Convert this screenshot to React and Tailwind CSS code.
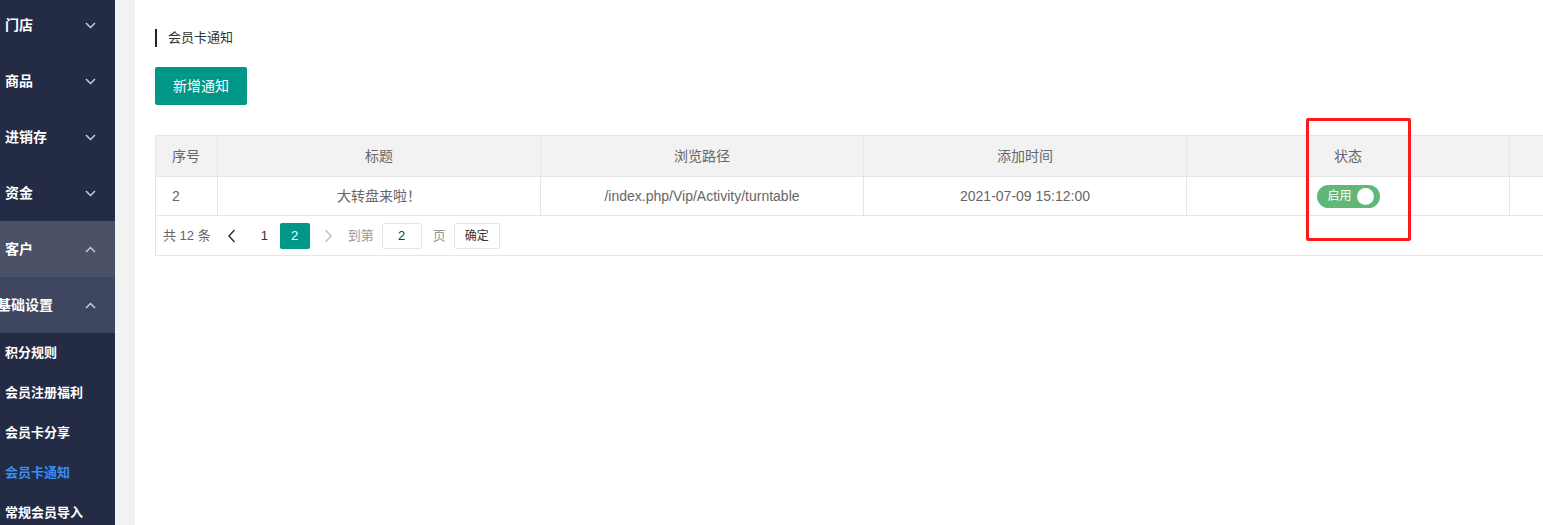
import React from "react";

const font = { fontFamily: "'Liberation Sans', 'Noto Sans CJK SC', sans-serif" };

function Chevron({ up }) {
  return (
    <svg width="11" height="7" viewBox="0 0 11 7" fill="none" className="shrink-0">
      {up ? (
        <path d="M1 6L5.5 1.5L10 6" stroke="#c9ccd6" strokeWidth="1.5" />
      ) : (
        <path d="M1 1L5.5 5.5L10 1" stroke="#c9ccd6" strokeWidth="1.5" />
      )}
    </svg>
  );
}

const menus = [
  { t: "门店" },
  { t: "商品" },
  { t: "进销存" },
  { t: "资金" },
  { t: "客户", up: true, bg: "bg-[#4b5166]" },
  { t: "基础设置", up: true, bg: "bg-[#3e4660]", shift: true },
];

const subs = ["积分规则", "会员注册福利", "会员卡分享", "会员卡通知", "常规会员导入"];

export default function App() {
  return (
    <div className="relative flex h-[525px] w-[1543px] overflow-hidden bg-white" style={font}>
      {/* Sidebar */}
      <div className="flex w-[115px] shrink-0 flex-col overflow-hidden bg-[#232b45]">
        {menus.map((m, i) => (
          <div
            key={i}
            className={`flex h-[56px] shrink-0 items-center justify-between pr-[19px] ${m.shift ? "-ml-[3px] pl-0" : "pl-[5px]"} ${m.bg || ""} ${i === 0 ? "-mt-[3px]" : ""}`}
          >
            <span className="whitespace-nowrap text-[14px] font-bold text-white">{m.t}</span>
            <Chevron up={m.up} />
          </div>
        ))}
        {subs.map((s, i) => (
          <div key={i} className="flex h-[40px] shrink-0 items-center pl-[5px]">
            <span className={`whitespace-nowrap text-[13px] font-bold ${s === "会员卡通知" ? "text-[#3b8ef0]" : "text-white"}`}>{s}</span>
          </div>
        ))}
      </div>
      <div className="w-[20px] shrink-0 bg-[#f2f2f2]" />
      {/* Content */}
      <div className="flex min-w-0 flex-1 flex-col overflow-hidden pl-[20px] pt-[29px]">
        <div className="flex h-[18px] items-center border-l-[2px] border-[#23262e] pl-[11px]">
          <span className="text-[13px] text-[#333]">会员卡通知</span>
        </div>
        <div className="mt-[20px]">
          <button className="h-[38px] w-[92px] rounded-[2px] bg-[#009688] text-[14px] text-white">新增通知</button>
        </div>
        <div className="mt-[30px] w-[1700px]">
          <table className="w-[1700px] table-fixed border-collapse text-[14px] text-[#666]">
            <colgroup>
              <col className="w-[62px]" />
              <col className="w-[323px]" />
              <col className="w-[323px]" />
              <col className="w-[323px]" />
              <col className="w-[323px]" />
              <col />
            </colgroup>
            <thead>
              <tr className="h-[41px] bg-[#f2f2f2]">
                <th className="border border-[#e6e6e6] pl-[16px] text-left font-normal">序号</th>
                <th className="border border-[#e6e6e6] font-normal">标题</th>
                <th className="border border-[#e6e6e6] font-normal">浏览路径</th>
                <th className="border border-[#e6e6e6] font-normal">添加时间</th>
                <th className="border border-[#e6e6e6] font-normal">状态</th>
                <th className="border border-[#e6e6e6] font-normal"></th>
              </tr>
            </thead>
            <tbody>
              <tr className="h-[39px]">
                <td className="border border-[#e6e6e6] pl-[16px] text-left">2</td>
                <td className="border border-[#e6e6e6] text-center">大转盘来啦<span style={{ fontFamily: "'Noto Sans CJK SC', sans-serif" }}>！</span></td>
                <td className="border border-[#e6e6e6] text-center">/index.php/Vip/Activity/turntable</td>
                <td className="border border-[#e6e6e6] text-center">2021-07-09 15:12:00</td>
                <td className="border border-[#e6e6e6] text-center">
                  <div className="inline-flex h-[23px] w-[63px] items-center justify-between rounded-full bg-[#5fb878] pl-[11px] pr-[6px] align-middle">
                    <span className="text-[12px] text-white">启用</span>
                    <span className="h-[17px] w-[17px] rounded-full bg-white" />
                  </div>
                </td>
                <td className="border border-[#e6e6e6]"></td>
              </tr>
            </tbody>
          </table>
          <div className="flex h-[40px] items-center border border-t-0 border-[#e6e6e6] pl-[7px] text-[13px] text-[#666]">
            <span>共 12 条</span>
            <span className="ml-[14px] flex w-[14px] justify-center">
              <svg width="9" height="14" viewBox="0 0 9 14" fill="none">
                <path d="M7.5 1L2 7L7.5 13" stroke="#333" strokeWidth="1.5" />
              </svg>
            </span>
            <span className="ml-[22px] w-[8px] text-[#333]">1</span>
            <span className="ml-[11px] flex h-[26px] w-[30px] items-center justify-center rounded-[2px] bg-[#009688] text-white">2</span>
            <span className="ml-[14px] flex w-[10px] justify-center">
              <svg width="9" height="14" viewBox="0 0 9 14" fill="none">
                <path d="M1.5 1L7 7L1.5 13" stroke="#c2c2c2" strokeWidth="1.5" />
              </svg>
            </span>
            <span className="ml-[14px] text-[#999]">到第</span>
            <span className="ml-[8px] flex h-[26px] w-[40px] items-center justify-center rounded-[2px] border border-[#e6e6e6] text-[#333]">2</span>
            <span className="ml-[11px] text-[#999]">页</span>
            <span className="ml-[8px] flex h-[26px] w-[46px] items-center justify-center rounded-[2px] border border-[#e6e6e6] text-[12px] text-[#333]">确定</span>
          </div>
        </div>
      </div>
      {/* Annotation box */}
      <div className="pointer-events-none absolute left-[1306px] top-[118px] h-[123px] w-[105px] rounded-[2px] border-[3px] border-[#ff1a1a]" />
    </div>
  );
}
